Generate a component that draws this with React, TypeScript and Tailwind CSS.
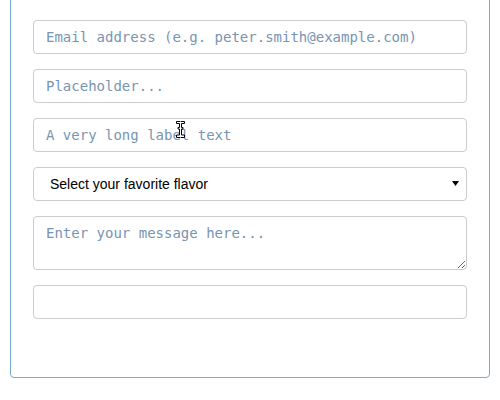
import React from "react";

const fieldClass =
  "block w-full h-[34px] rounded-[4px] border border-[#cccccc] bg-white px-3 text-[14px] text-[#333] outline-none placeholder:text-[#7895b2] font-['DejaVu_Sans_Mono',monospace]";

const App: React.FC = () => {
  return (
    <div className="w-[500px] h-[400px] overflow-hidden bg-white">
      <div className="relative mx-[10px] -mt-[20px] rounded-[4px] border border-[#7aaad0] px-[22px] pt-[39px] pb-[58px]">
        <div className="flex flex-col gap-[15px]">
          <input className={fieldClass} placeholder="Email address (e.g. peter.smith@example.com)" />
          <input className={fieldClass} placeholder="Placeholder..." />
          <input className={fieldClass} placeholder="A very long label text" />
          <div className="relative">
            <select className="block w-full h-[34px] appearance-none rounded-[4px] border border-[#cccccc] bg-white pl-4 text-[14px] text-black outline-none font-['Liberation_Sans',Arial,sans-serif]">
              <option>Select your favorite flavor</option>
              <option>Vanilla</option>
              <option>Chocolate</option>
            </select>
            <svg className="pointer-events-none absolute right-[8px] top-[13px]" width="7" height="7" viewBox="0 0 7 7">
              <path d="M0 1h7L3.5 6z" fill="#000" />
            </svg>
          </div>
          <textarea
            className="block w-full h-[54px] rounded-[4px] border border-[#cccccc] bg-white px-3 pt-[6px] text-[14px] text-[#333] outline-none placeholder:text-[#7895b2] font-['DejaVu_Sans_Mono',monospace]"
            placeholder="Enter your message here..."
          />
          <input className={fieldClass} />
        </div>
        {/* text cursor over the third field */}
        <svg className="pointer-events-none absolute left-[165px] top-[140px]" width="9" height="17" viewBox="0 0 9 17">
          <path
            d="M0.5 0.5h3.5l0.5 0.5 0.5-0.5h3.5v2h-3v4h1.5v1.5h-1.5v6h3v2.5h-3.5l-0.5-0.5-0.5 0.5h-3.5v-2.5h3v-6h-1.5v-1.5h1.5v-4h-3z"
            fill="#fff"
            stroke="#000"
            strokeWidth="1"
          />
        </svg>
      </div>
    </div>
  );
};

export default App;
